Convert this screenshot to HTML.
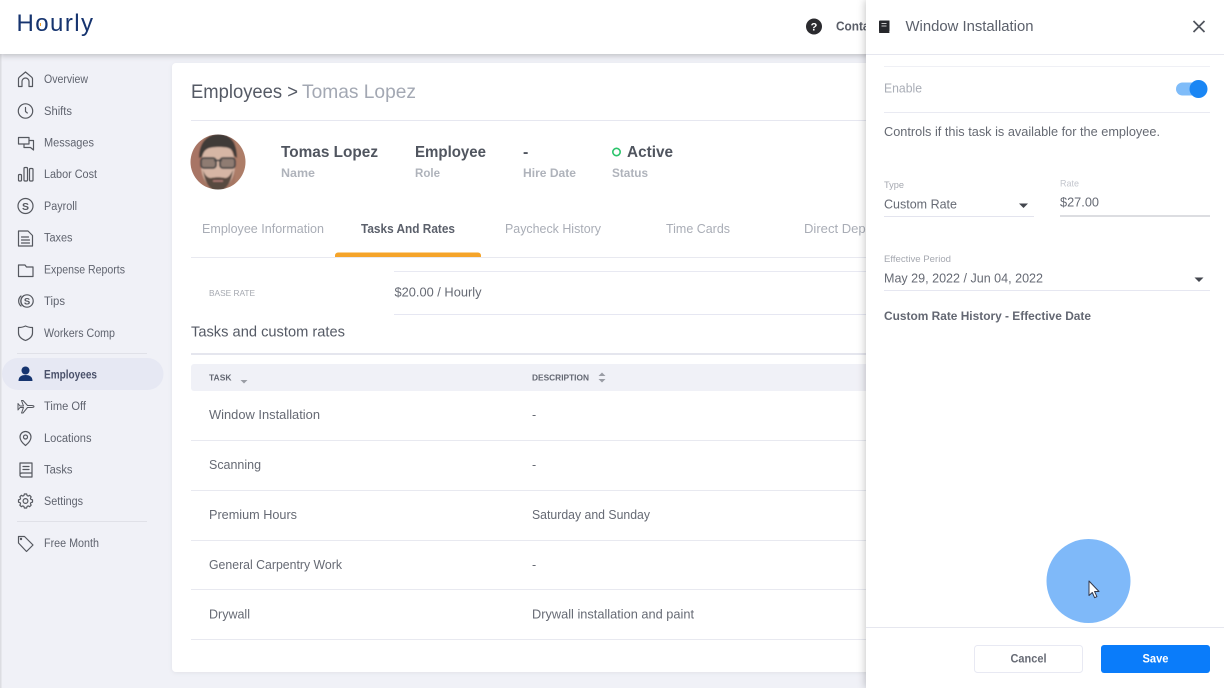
<!DOCTYPE html>
<html><head><meta charset="utf-8"><style>
html,body{margin:0;padding:0;width:1224px;height:688px;overflow:hidden;background:#f0f1f7}
svg{display:block;font-family:"Liberation Sans",sans-serif}
.n{font-size:11.5px;fill:#5f636e}
.i{fill:none;stroke:#55585f;stroke-width:1.2;stroke-linejoin:round;stroke-linecap:round}
.t{font-size:12.5px;fill:#666a74}
</style></head><body>
<svg width="1224" height="688" viewBox="0 0 1224 688" xmlns="http://www.w3.org/2000/svg">
<defs>
<filter id="s" x="-5%" y="-50%" width="110%" height="220%"><feDropShadow dx="0" dy="2" stdDeviation="3" flood-color="#000" flood-opacity=".2"/></filter>
<filter id="p" x="-10%" y="-5%" width="120%" height="110%"><feDropShadow dx="-1" dy="0" stdDeviation="4" flood-color="#000" flood-opacity=".22"/></filter>
<filter id="c" x="-5%" y="-5%" width="110%" height="110%"><feDropShadow dx="0" dy="1" stdDeviation="2" flood-color="#000" flood-opacity=".06"/></filter>
<filter id="b"><feGaussianBlur stdDeviation=".9"/></filter>
<clipPath id="av"><circle cx="218" cy="162" r="27.5"/></clipPath>
</defs>
<rect width="1224" height="688" fill="#f0f1f7"/>
<rect x="0" y="54" width="1.5" height="634" fill="#dcdde2"/>

<!-- Top bar -->
<rect x="0" y="0" width="1224" height="54" fill="#fff" filter="url(#s)"/>
<text x="16.500" y="31" font-size="24" fill="#16346f" textLength="76.500" lengthAdjust="spacing">Hourly</text>
<path d="M40.500 23v3" fill="none" stroke="#f2a22c" stroke-width="1"/>
<circle cx="814" cy="26.500" r="8" fill="#2b2b2f"/>
<text x="814" y="30.500" font-size="11" font-weight="bold" fill="#fff" text-anchor="middle">?</text>
<text x="836" y="30.500" font-size="12.500" font-weight="bold" fill="#5a5e68" textLength="44" lengthAdjust="spacingAndGlyphs">Contact</text>

<!-- Main card -->
<rect x="172" y="63" width="760" height="609" rx="4" fill="#fff" filter="url(#c)"/>
<text x="191" y="98" font-size="19.500" fill="#555a65" textLength="107" lengthAdjust="spacingAndGlyphs">Employees &gt;</text>
<text x="302" y="98" font-size="19.500" fill="#a3a8b3" textLength="114" lengthAdjust="spacingAndGlyphs">Tomas Lopez</text>
<rect x="191" y="120" width="680" height="1" fill="#e6e7f0"/>

<!-- Avatar -->
<g clip-path="url(#av)"><g filter="url(#b)">
<rect x="188" y="132" width="60" height="60" fill="#a57664"/>
<rect x="188" y="132" width="14" height="60" fill="#a87565"/>
<rect x="235" y="132" width="13" height="60" fill="#ad7d68"/>
<ellipse cx="218" cy="165" rx="17" ry="24" fill="#d6b6a5"/>
<path d="M199 158c0-17 10-24 20-24s18 7 18 24l-3-2c-1-7-4-9-15-9s-15 2-17 10z" fill="#3f3a38"/>
<path d="M203 170c2 14 8 21 15 21s13-7 15-21c-3 6-5 8-8 8-4-1-10-1-14 0-3 0-6-2-8-8z" fill="#58493f"/>
<rect x="201" y="158" width="15" height="10" rx="3" fill="#8f7b72" stroke="#4a4646" stroke-width="1.800"/>
<rect x="220" y="158" width="15" height="10" rx="3" fill="#8f7b72" stroke="#4a4646" stroke-width="1.800"/>
<rect x="214" y="159.500" width="8" height="1.800" fill="#4a4646"/>
<path d="M213 181h10" stroke="#b87f78" stroke-width="1.500"/>
</g></g>

<!-- Profile facts -->
<text x="281" y="157" font-size="16" font-weight="bold" fill="#50555f" textLength="97" lengthAdjust="spacingAndGlyphs">Tomas Lopez</text>
<text x="281" y="177" font-size="12" font-weight="bold" fill="#afb3bb" textLength="34" lengthAdjust="spacingAndGlyphs">Name</text>
<text x="415" y="157" font-size="16" font-weight="bold" fill="#50555f" textLength="71" lengthAdjust="spacingAndGlyphs">Employee</text>
<text x="415" y="177" font-size="12" font-weight="bold" fill="#afb3bb" textLength="25" lengthAdjust="spacingAndGlyphs">Role</text>
<text x="523" y="157" font-size="16" font-weight="bold" fill="#50555f">-</text>
<text x="523" y="177" font-size="12" font-weight="bold" fill="#afb3bb" textLength="53" lengthAdjust="spacingAndGlyphs">Hire Date</text>
<circle cx="616.500" cy="152" r="3.700" fill="none" stroke="#2bc46b" stroke-width="1.600"/>
<text x="627" y="157" font-size="16" font-weight="bold" fill="#50555f" textLength="46" lengthAdjust="spacingAndGlyphs">Active</text>
<text x="612" y="177" font-size="12" font-weight="bold" fill="#afb3bb" textLength="36" lengthAdjust="spacingAndGlyphs">Status</text>

<!-- Tabs -->
<g font-size="12.500" fill="#a9adb6">
<text x="202" y="233" textLength="122" lengthAdjust="spacingAndGlyphs">Employee Information</text>
<text x="505" y="233" textLength="96" lengthAdjust="spacingAndGlyphs">Paycheck History</text>
<text x="666" y="233" textLength="64" lengthAdjust="spacingAndGlyphs">Time Cards</text>
<text x="804" y="233" textLength="82" lengthAdjust="spacingAndGlyphs">Direct Deposit</text>
</g>
<text x="361" y="233" font-size="12.500" font-weight="bold" fill="#5b606b" textLength="94" lengthAdjust="spacingAndGlyphs">Tasks And Rates</text>
<rect x="191" y="257" width="680" height="1" fill="#e8e9f0"/>
<path d="M335 257v-1.500a3 3 0 0 1 3-3h140a3 3 0 0 1 3 3v1.500z" fill="#f5a42a"/>

<!-- Base rate -->
<rect x="394" y="271" width="477" height="1" fill="#e8e9f2"/>
<text x="209" y="296" font-size="8.500" fill="#a5a8b0" textLength="46" lengthAdjust="spacingAndGlyphs">BASE RATE</text>
<text x="394.500" y="296.500" font-size="12.500" fill="#666a74" textLength="87" lengthAdjust="spacingAndGlyphs">$20.00 / Hourly</text>
<rect x="394" y="314" width="477" height="1" fill="#e6e7f2"/>
<text x="191" y="336.500" font-size="14.500" fill="#555a65" textLength="154" lengthAdjust="spacingAndGlyphs">Tasks and custom rates</text>
<rect x="191" y="353" width="680" height="2" fill="#e5e6ee"/>

<!-- Table -->
<rect x="191" y="364" width="680" height="27" rx="3" fill="#f0f1f7"/>
<text x="209" y="380.500" font-size="8.500" font-weight="bold" fill="#636772" textLength="22.500" lengthAdjust="spacingAndGlyphs">TASK</text>
<path d="M240.500 380h7l-3.500 3.500z" fill="#9a9da5"/>
<text x="532" y="380.500" font-size="8.500" font-weight="bold" fill="#636772" textLength="57" lengthAdjust="spacingAndGlyphs">DESCRIPTION</text>
<path d="M598.500 376h7l-3.500-3.500zM598.500 379h7l-3.500 3.500z" fill="#9a9da5"/>
<g class="t">
<text x="209" y="419" textLength="111" lengthAdjust="spacingAndGlyphs">Window Installation</text><text x="532" y="419">-</text>
<text x="209" y="469" textLength="52" lengthAdjust="spacingAndGlyphs">Scanning</text><text x="532" y="469">-</text>
<text x="209" y="519" textLength="88" lengthAdjust="spacingAndGlyphs">Premium Hours</text><text x="532" y="519" textLength="118" lengthAdjust="spacingAndGlyphs">Saturday and Sunday</text>
<text x="209" y="569" textLength="133" lengthAdjust="spacingAndGlyphs">General Carpentry Work</text><text x="532" y="569">-</text>
<text x="209" y="618.500" textLength="41" lengthAdjust="spacingAndGlyphs">Drywall</text><text x="532" y="618.500" textLength="162" lengthAdjust="spacingAndGlyphs">Drywall installation and paint</text>
</g>
<g fill="#e8e9f0">
<rect x="191" y="440" width="680" height="1"/><rect x="191" y="490" width="680" height="1"/><rect x="191" y="540" width="680" height="1"/><rect x="191" y="589" width="680" height="1"/><rect x="191" y="639" width="680" height="1"/>
</g>

<!-- Sidebar -->
<rect x="2" y="358" width="161.500" height="32" rx="16" fill="#e6e8f3"/>
<rect x="17" y="353" width="130" height="1" fill="#e0e1e8"/>
<rect x="17" y="521" width="130" height="1" fill="#e0e1e8"/>
<g class="n">
<text x="44" y="83" textLength="44" lengthAdjust="spacingAndGlyphs">Overview</text>
<text x="44" y="115" textLength="28" lengthAdjust="spacingAndGlyphs">Shifts</text>
<text x="44" y="146.500" textLength="50" lengthAdjust="spacingAndGlyphs">Messages</text>
<text x="44" y="178" textLength="53" lengthAdjust="spacingAndGlyphs">Labor Cost</text>
<text x="44" y="210" textLength="33" lengthAdjust="spacingAndGlyphs">Payroll</text>
<text x="44" y="241.500" textLength="28.500" lengthAdjust="spacingAndGlyphs">Taxes</text>
<text x="44" y="273.500" textLength="81" lengthAdjust="spacingAndGlyphs">Expense Reports</text>
<text x="44" y="305" textLength="21" lengthAdjust="spacingAndGlyphs">Tips</text>
<text x="44" y="337" textLength="71" lengthAdjust="spacingAndGlyphs">Workers Comp</text>
<text x="44" y="378.500" font-weight="bold" fill="#4a516a" textLength="53" lengthAdjust="spacingAndGlyphs">Employees</text>
<text x="44" y="410" textLength="42" lengthAdjust="spacingAndGlyphs">Time Off</text>
<text x="44" y="442" textLength="47.500" lengthAdjust="spacingAndGlyphs">Locations</text>
<text x="44" y="473.500" textLength="28.500" lengthAdjust="spacingAndGlyphs">Tasks</text>
<text x="44" y="505" textLength="39" lengthAdjust="spacingAndGlyphs">Settings</text>
<text x="44" y="547" textLength="55" lengthAdjust="spacingAndGlyphs">Free Month</text>
</g>
<g class="i">
<path d="M18.500 86.500v-7.500c0-.8.3-1.300.8-1.800l6.200-5.200 6.200 5.200c.5.500.8 1 .8 1.800v7.500h-3.500v-5a3.500 3.500 0 0 0-7 0v5z"/>
<circle cx="25.500" cy="111" r="7.200"/><path d="M25.500 107.500v4l1.800 1.500"/>
<path d="M18.500 137.500h10.500v6.500h-10.500zM24 144.500v3h6.500l3 2.500v-9.500h-4"/>
<rect x="18.500" y="174.500" width="3" height="6.500" rx="1"/><rect x="24" y="167.500" width="3.500" height="13.500" rx="1"/><rect x="29.500" y="168.500" width="3.500" height="12.500" rx="1"/>
<circle cx="25.500" cy="206" r="7.500"/>
<path d="M18.500 231h9.500l4.500 4.500v10.500h-14z"/><path d="M21.500 237h7M21.500 240h8M21.500 243h8"/>
<path d="M18.500 265h6.500l1.500 2h6.500v9.500h-14.500z"/>
<circle cx="27" cy="301" r="6.200"/><path d="M24 295.500a6.500 6.500 0 0 0 0 11M21 296a6.500 6.500 0 0 0 0 10"/>
<path d="M18.500 327.500c3 0 5-.5 7-1.500 2 1 4 1.500 7 1.500v5.500c0 3.500-3 6-7 7.500-4-1.500-7-4-7-7.500z"/>
<path d="M18 403.500l2 2.500h3.500l-2-5.500h1.500l4.500 5h4c1.500 0 2.500.5 2.500 1s-1 1-2.500 1h-4l-4.500 5.500h-1.500l2-5.500h-3.500l-2 2.500z" stroke-width="1"/>
<path d="M25.500 431.500a5.500 5.500 0 0 1 5.500 5.500c0 3-3 6.500-5.500 8.500-2.500-2-5.500-5.500-5.500-8.500a5.500 5.500 0 0 1 5.500-5.500z"/><circle cx="25.500" cy="437" r="2"/>
<path d="M20 474.500v-11.500h12v14h-10a2 2 0 0 1-2-2.500c0-1 1-1.500 2-1.500h10M23 466.500h6M23 469.500h6"/>
<path d="M24 492h3l.5 2 1.500.7 1.800-1 2 2-1 1.800.7 1.500 2 .5v3l-2 .5-.7 1.500 1 1.800-2 2-1.800-1-1.500.7-.5 2h-3l-.5-2-1.500-.7-1.800 1-2-2 1-1.800-.7-1.500-2-.5v-3l2-.5.7-1.500-1-1.800 2-2 1.800 1 1.500-.7z" transform="translate(25.500 501) scale(.78) translate(-25.500 -501)" stroke-width="1.500"/><circle cx="25.500" cy="501" r="2.400"/>
<path d="M18.500 536.500h6l8.500 8.500-6.500 6.500-8-8.500z"/>
</g>
<text x="25.500" y="209.800" font-size="10.500" font-weight="bold" fill="#55585f" text-anchor="middle">S</text>
<text x="27" y="304.500" font-size="9.500" font-weight="bold" fill="#55585f" text-anchor="middle">S</text>
<circle cx="21" cy="539" r="1.200" fill="#55585f"/>
<circle cx="25.500" cy="370.500" r="4" fill="#16346f"/>
<path d="M18.500 381c0-4.500 3-6 7-6s7 1.500 7 6z" fill="#16346f"/>

<!-- Right panel -->
<rect x="866" y="0" width="358" height="688" fill="#fff" filter="url(#p)"/>
<rect x="866" y="54" width="358" height="1" fill="#e6e7ef"/>
<path d="M879 21.500a1 1 0 0 1 1-1h9.500v10.500h-9.500a1 1 0 0 0-1 .8z" fill="#26272b"/>
<rect x="879" y="31" width="10.500" height="2" rx=".8" fill="#26272b"/>
<path d="M881.500 23.500h5M881.500 26h5" stroke="#fff" stroke-width=".8"/>
<text x="905.500" y="31" font-size="14.500" fill="#5b606b" textLength="128" lengthAdjust="spacingAndGlyphs">Window Installation</text>
<path d="M1193.500 21l11 11M1204.500 21l-11 11" stroke="#50545d" stroke-width="1.700" fill="none"/>
<rect x="884" y="66" width="326" height="1" fill="#eff0f5"/>
<text x="884" y="92.500" font-size="12.500" fill="#a9adb6" textLength="38" lengthAdjust="spacingAndGlyphs">Enable</text>
<rect x="1176" y="82.500" width="30" height="13" rx="6.500" fill="#7fbcf9"/>
<circle cx="1198.500" cy="89" r="9" fill="#1a86f4"/>
<rect x="884" y="112" width="326" height="1" fill="#e9eaf2"/>
<text x="884" y="136" font-size="12.500" fill="#666a73" textLength="276" lengthAdjust="spacingAndGlyphs">Controls if this task is available for the employee.</text>

<text x="884" y="188" font-size="9" fill="#a5a8b0" textLength="20" lengthAdjust="spacingAndGlyphs">Type</text>
<text x="884" y="208.500" font-size="12.500" fill="#666a74" textLength="73" lengthAdjust="spacingAndGlyphs">Custom Rate</text>
<path d="M1019 203.500h9l-4.500 4.500z" fill="#43464e"/>
<rect x="884" y="216" width="150" height="1" fill="#e3e4ee"/>
<text x="1060" y="186.500" font-size="9" fill="#c3c6cd" textLength="19" lengthAdjust="spacingAndGlyphs">Rate</text>
<text x="1060" y="206.500" font-size="12.500" fill="#666a74" textLength="39" lengthAdjust="spacingAndGlyphs">$27.00</text>
<rect x="1060" y="215.500" width="150" height="1" fill="#b9bbc3"/>

<text x="884" y="262" font-size="9.500" fill="#a5a8b0" textLength="67" lengthAdjust="spacingAndGlyphs">Effective Period</text>
<text x="884" y="282.500" font-size="12.500" fill="#666a74" textLength="159" lengthAdjust="spacingAndGlyphs">May 29, 2022 / Jun 04, 2022</text>
<path d="M1194.500 277.500h9l-4.500 4.500z" fill="#43464e"/>
<rect x="884" y="290" width="326" height="1" fill="#e6e7f1"/>
<text x="884" y="320" font-size="12" font-weight="bold" fill="#636772" textLength="207" lengthAdjust="spacingAndGlyphs">Custom Rate History - Effective Date</text>

<!-- Click highlight and cursor -->
<circle cx="1088.500" cy="581" r="42" fill="#7fb9f9"/>
<path d="M1089 581v14.500l3.300-3 2.300 5.200 2.300-1-2.300-5.200h4.400z" fill="#fff" stroke="#33384a" stroke-width="1" stroke-linejoin="round"/>

<!-- Footer -->
<rect x="866" y="627" width="358" height="1" fill="#e6e7ef"/>
<rect x="974.500" y="645.500" width="108" height="27" rx="3" fill="#fff" stroke="#e8e9f3"/>
<text x="1028.500" y="662.500" font-size="11.500" font-weight="bold" fill="#666a74" text-anchor="middle" textLength="36" lengthAdjust="spacingAndGlyphs">Cancel</text>
<rect x="1101" y="645" width="109" height="28" rx="3" fill="#0a7cfa"/>
<text x="1155.500" y="662.500" font-size="11.500" font-weight="bold" fill="#fff" text-anchor="middle" textLength="26" lengthAdjust="spacingAndGlyphs">Save</text>
</svg>
</body></html>
